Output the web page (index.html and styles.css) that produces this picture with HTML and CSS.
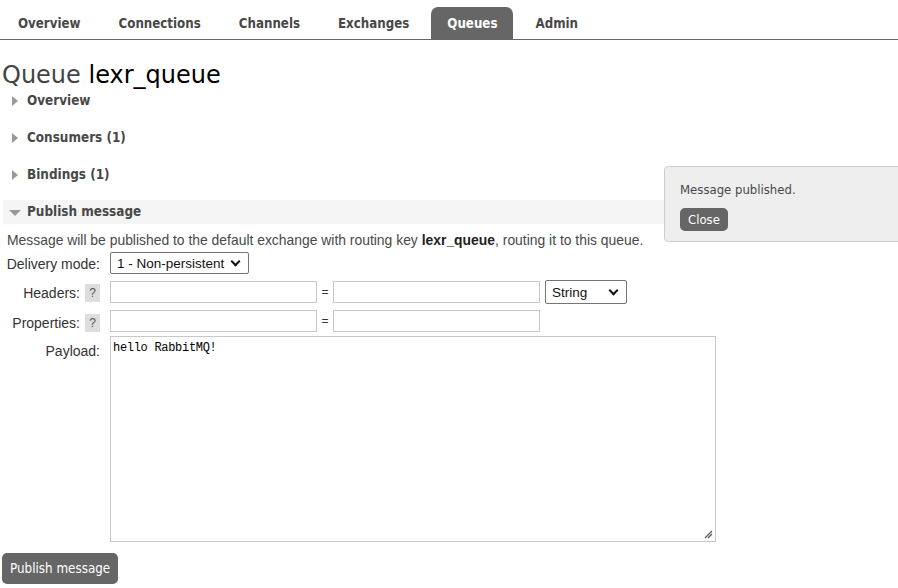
FILE: index.html
```html
<!DOCTYPE html>
<html>
<head>
<meta charset="utf-8">
<link rel="stylesheet" href="styles.css">
</head>
<body>
<nav class="tabs">
  <a class="tab">Overview</a>
  <a class="tab">Connections</a>
  <a class="tab">Channels</a>
  <a class="tab">Exchanges</a>
  <a class="tab active">Queues</a>
  <a class="tab">Admin</a>
</nav>
<main class="main">
  <h1 class="title"><span class="kind">Queue</span> lexr_queue</h1>
  <div class="section"><span class="tri right"></span>Overview</div>
  <div class="section"><span class="tri right"></span>Consumers (1)</div>
  <div class="section"><span class="tri right"></span>Bindings (1)</div>
  <div class="section open"><span class="tri down"></span>Publish message</div>
  <p class="note">Message will be published to the default exchange with routing key <b>lexr_queue</b>, routing it to this queue.</p>
  <div class="form">
    <div class="row">
      <label class="lbl">Delivery mode:</label>
      <div class="field"><div class="select sel-mode">1 - Non-persistent<span class="chev"></span></div></div>
    </div>
    <div class="row">
      <label class="lbl">Headers: <span class="help">?</span></label>
      <div class="field"><span class="input"></span><span class="eq">=</span><span class="input"></span><div class="select sel-type">String<span class="chev"></span></div></div>
    </div>
    <div class="row">
      <label class="lbl">Properties: <span class="help">?</span></label>
      <div class="field"><span class="input"></span><span class="eq">=</span><span class="input"></span></div>
    </div>
    <div class="row payload">
      <label class="lbl">Payload:</label>
      <div class="field"><div class="textarea">hello RabbitMQ!<svg class="grip" width="9" height="9" viewBox="0 0 9 9"><path d="M8 1 L1 8 M8 4 L4 8" stroke="#555" stroke-width="1.2" fill="none"/></svg></div></div>
    </div>
  </div>
  <button class="btn publish">Publish message</button>
</main>
<div class="popup">
  <p class="popup-text">Message published.</p>
  <button class="btn close">Close</button>
</div>
</body>
</html>
```
FILE: styles.css
```css
html, body { margin: 0; padding: 0; background: #fff; }
body { font-family: "DejaVu Sans", Verdana, sans-serif; color: #484848; position: relative; width: 898px; height: 588px; overflow: hidden; }

.tabs { display: flex; gap: 6px; padding: 7px 0 0 2px; border-bottom: 1px solid #666; height: 32px; box-sizing: content-box; }
.tab { font-family: "DejaVu Sans Condensed", "DejaVu Sans", sans-serif; font-weight: bold; font-size: 13.2px; color: #484848; padding: 0 16px; line-height: 33px; height: 32px; border-radius: 7px 7px 0 0; }
.tab.active { background: #666; color: #fff; }

.main { padding: 0 0 0 2px; }
.title { margin: 21px 0 0 0; font-size: 24px; font-weight: normal; color: #000; line-height: 28px; }
.title .kind { color: #444; }

.section { font-family: "DejaVu Sans Condensed", "DejaVu Sans", sans-serif; font-weight: bold; font-size: 13.4px; color: #484848; height: 24px; line-height: 24px; padding-left: 25px; position: relative; margin-bottom: 13px; }
.section.open { background: #f5f5f5; margin-bottom: 0; margin-left: 1px; padding-left: 24px; }
.tri { position: absolute; left: 10px; top: 7px; width: 0; height: 0; }
.tri.right { border-top: 5px solid transparent; border-bottom: 5px solid transparent; border-left: 6px solid #999; }
.tri.down { top: 10px; left: 6px; border-left: 6px solid transparent; border-right: 6px solid transparent; border-top: 6px solid #999; }

.note { font-family: "Liberation Sans", Arial, sans-serif; font-size: 13.9px; color: #484848; margin: 8px 0 0 5px; line-height: 16px; }
.note b { color: #222; }

.form { display: flex; flex-direction: column; gap: 6px; margin-top: 4px; }
.row { display: flex; align-items: flex-start; }
.row.payload { margin-top: -2px; }
.lbl { width: 98px; box-sizing: border-box; text-align: right; font-family: "Liberation Sans", Arial, sans-serif; font-size: 14px; color: #333; padding-top: 4px; display: flex; justify-content: flex-end; align-items: center; gap: 5px; margin-left: 0; }
.row.payload .lbl { padding-top: 7px; }
.field { display: flex; align-items: center; margin-left: 10px; }
.help { display: inline-block; width: 15px; height: 18px; background: #ddd; color: #555; font-size: 12px; line-height: 18px; text-align: center; }
.input { display: inline-block; width: 207px; height: 22px; box-sizing: border-box; border: 1px solid #c8c8c8; background: #fff; }
.eq { display: inline-block; width: 16px; text-align: center; font-family: "Liberation Sans", Arial, sans-serif; font-size: 12px; color: #333; }
.select { display: flex; align-items: center; justify-content: space-between; box-sizing: border-box; border: 1px solid #767676; border-radius: 2px; font-family: "Liberation Sans", Arial, sans-serif; font-size: 13.5px; color: #111; padding: 0 6px 0 6px; background: #fff; }
.sel-mode { width: 139px; height: 22px; }
.sel-type { width: 82px; height: 24px; margin-left: 5px; }
.chev { width: 5px; height: 5px; border-right: 2px solid #111; border-bottom: 2px solid #111; transform: rotate(45deg); margin-top: -4px; margin-right: 3px; }

.textarea { position: relative; width: 606px; height: 206px; box-sizing: border-box; border: 1px solid #c8c8c8; font-family: "Liberation Mono", "Courier New", monospace; font-size: 12px; letter-spacing: -0.3px; color: #000; padding: 4px 2px; line-height: 14px; }
.grip { position: absolute; right: 2px; bottom: 2px; }

.btn { border: none; background: #666; color: #fff; font-family: "DejaVu Sans Condensed", "DejaVu Sans", sans-serif; border-radius: 5px; cursor: pointer; }
.publish { margin: 11px 0 0 0; height: 31px; padding: 0 8px; font-size: 13.3px; }

.popup { position: absolute; left: 664px; top: 166px; width: 250px; height: 76px; box-sizing: border-box; background: #eee; border: 1px solid #ccc; border-radius: 4px; padding: 15px 15px; }
.popup-text { margin: 0; font-family: "DejaVu Sans Condensed", "DejaVu Sans", sans-serif; font-size: 13px; color: #484848; line-height: 16px; }
.close { margin-top: 10px; height: 23px; padding: 0 8px; font-size: 13px; }
```
